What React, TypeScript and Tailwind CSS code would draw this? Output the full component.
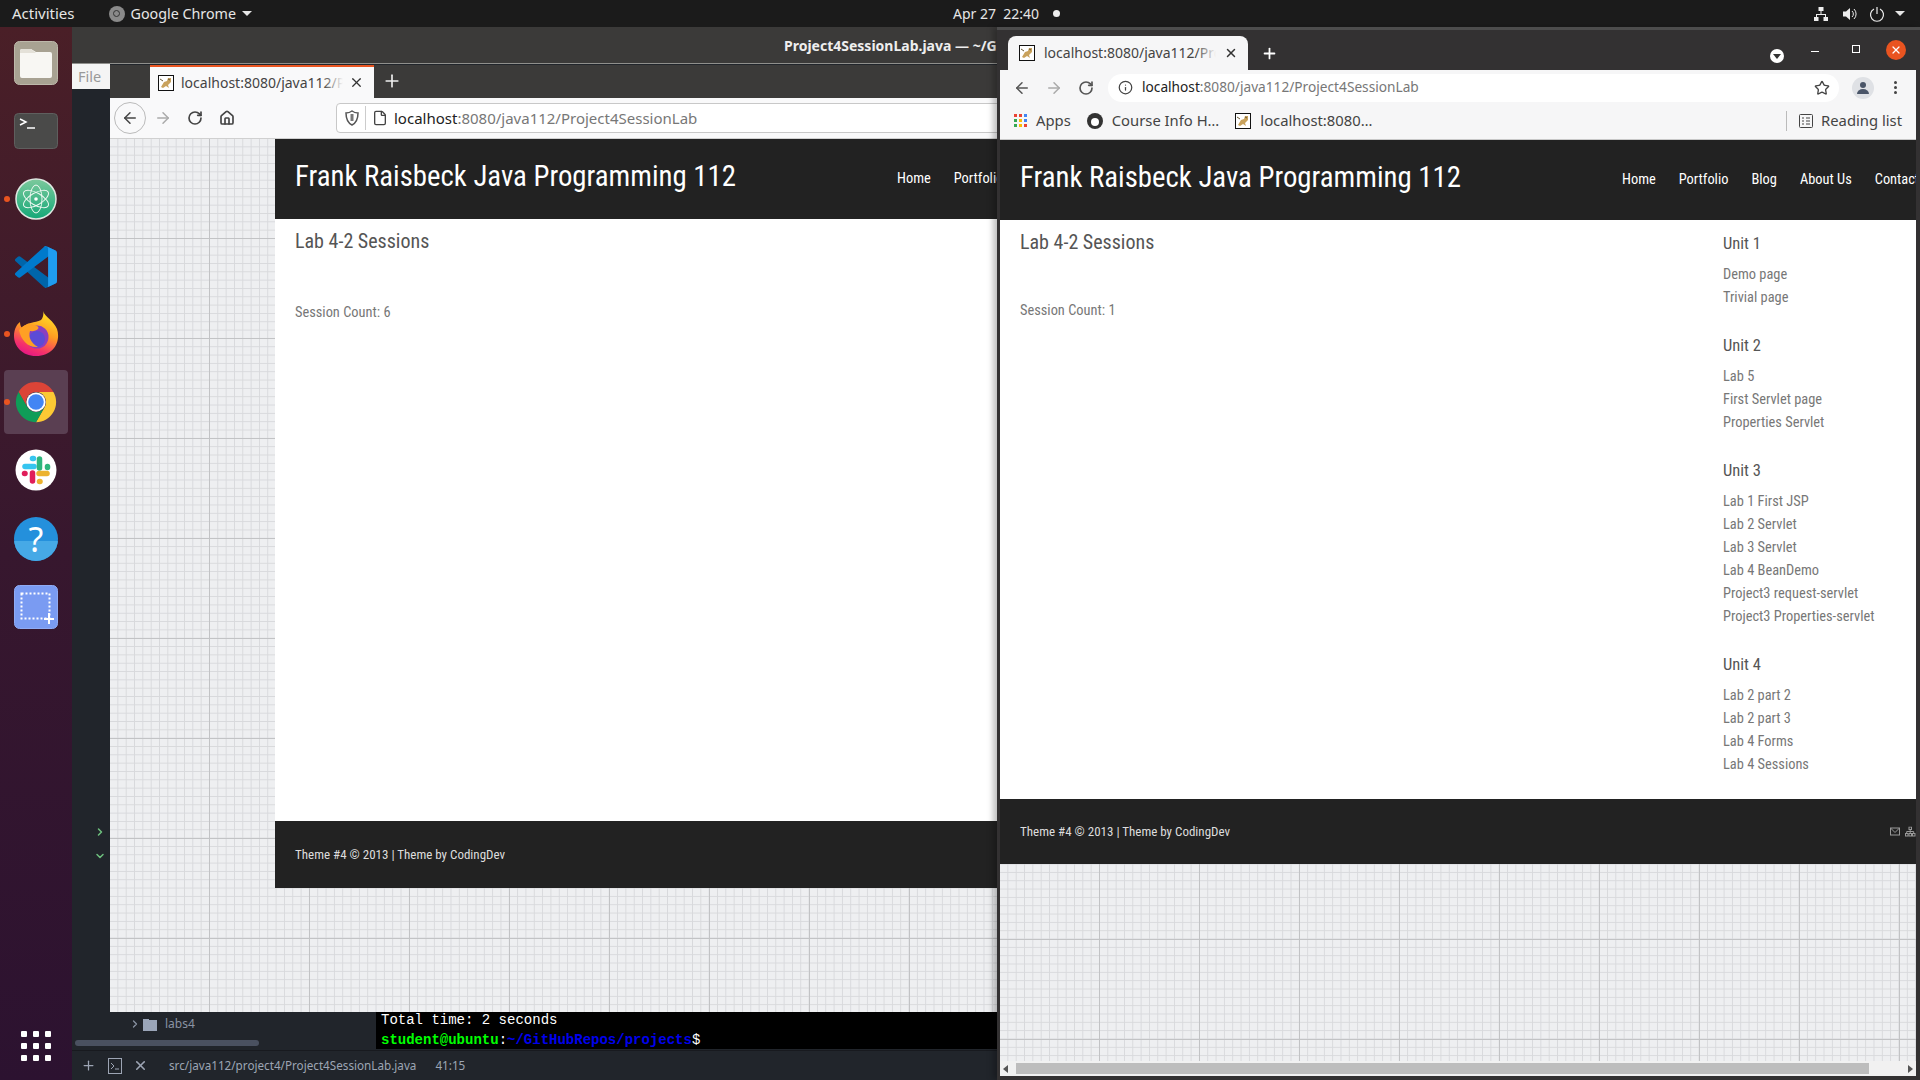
import { ArrowLeft, ArrowRight, ChevronDown, ChevronRight, File, House, Info, Plus, RotateCw, Star, X } from "lucide-react"

const condensed = "font-['Roboto_Condensed','Liberation_Sans_Narrow',Roboto,sans-serif]"

const units = [
  { title: "Unit 1", links: ["Demo page", "Trivial page"] },
  { title: "Unit 2", links: ["Lab 5", "First Servlet page", "Properties Servlet"] },
  { title: "Unit 3", links: ["Lab 1 First JSP", "Lab 2 Servlet", "Lab 3 Servlet", "Lab 4 BeanDemo", "Project3 request-servlet", "Project3 Properties-servlet"] },
  { title: "Unit 4", links: ["Lab 2 part 2", "Lab 2 part 3", "Lab 4 Forms", "Lab 4 Sessions"] },
]

// graph paper wallpaper behind both browser pages
const gridPaper =
  "bg-[#eeeff1] bg-[linear-gradient(to_right,#c2c3c5_1px,transparent_1px),linear-gradient(to_bottom,#c2c3c5_1px,transparent_1px),linear-gradient(to_right,#d8d9dc_1px,transparent_1px),linear-gradient(to_bottom,#d8d9dc_1px,transparent_1px)] bg-size-[100px_100px,100px_100px,8.333px_8.333px,8.333px_8.333px] bg-position-[99px_99px]"

function TomcatIcon() {
  return (
    <svg width="16" height="16" viewBox="0 0 16 16" className="shrink-0">
      <rect x="0.5" y="0.5" width="15" height="15" fill="#fff" stroke="#111" />
      <path d="M3 12 L6 7 L9 6 L10 3 L13 3 L13 7 L10 10 L11 13 L8 11 L5 13 Z" fill="#c9a25c" />
      <path d="M2 4 L5 6 M10 4 L12 5" stroke="#6b5a35" strokeWidth="1" />
    </svg>
  )
}

function FilesIcon() {
  return (
    <svg width="44" height="44" viewBox="0 0 44 44">
      <rect x="0.5" y="0.5" width="43" height="43" rx="5" fill="#a8a292" stroke="#bdb8aa" />
      <path d="M6 10 a2 2 0 0 1 2-2 h9 l5 3 h14 a2 2 0 0 1 2 2 v22 a2 2 0 0 1-2 2 H8 a2 2 0 0 1-2-2 z" fill="#f8f7f3" />
      <path d="M6 10 a2 2 0 0 1 2-2 h9 l5 4 H6 z" fill="#e4e1d8" />
    </svg>
  )
}

function TerminalIcon() {
  return (
    <svg width="44" height="36" viewBox="0 0 44 36">
      <rect x="0.5" y="0.5" width="43" height="35" rx="4" fill="#4a4a49" stroke="#5f5f5e" />
      <path d="M6 6 L12 9 L6 12" fill="none" stroke="#fff" strokeWidth="1.5" />
      <path d="M13 15 H21" stroke="#fff" strokeWidth="1.5" />
    </svg>
  )
}

function AtomIcon() {
  return (
    <svg width="42" height="42" viewBox="0 0 42 42">
      <defs>
        <linearGradient id="atomFill" x1="0" y1="0" x2="0" y2="1">
          <stop offset="0" stopColor="#7cc99c" />
          <stop offset="1" stopColor="#14a878" />
        </linearGradient>
      </defs>
      <circle cx="21" cy="21" r="20" fill="url(#atomFill)" stroke="#dfe8e2" strokeWidth="1.5" />
      <g fill="none" stroke="#eef8f2" strokeWidth="1">
        <ellipse cx="21" cy="21" rx="6" ry="14" />
        <ellipse cx="21" cy="21" rx="6" ry="14" transform="rotate(60 21 21)" />
        <ellipse cx="21" cy="21" rx="6" ry="14" transform="rotate(-60 21 21)" />
      </g>
      <circle cx="21" cy="21" r="1.8" fill="#fff" />
    </svg>
  )
}

function VsCodeIcon() {
  return (
    <svg width="42" height="42" viewBox="0 0 100 100">
      <path d="M96.5 89.2 L75.9 99.1 a6.2 6.2 0 0 1-7.1-1.2 L1.4 36.5 a4.2 4.2 0 0 1 0-6.2 l5.5-5 a4.2 4.2 0 0 1 5.3-.2 L93.4 85.7 A4.1 4.1 0 0 0 100 82.4 v.2 a6.2 6.2 0 0 1-3.5 5.6 z" fill="#0065a9" />
      <path d="M96.5 10.8 L75.9 .9 a6.2 6.2 0 0 0-7.1 1.2 L1.4 63.5 a4.2 4.2 0 0 0 0 6.2 l5.5 5 a4.2 4.2 0 0 0 5.3.2 L93.4 14.3 A4.1 4.1 0 0 1 100 17.6 v-.2 a6.2 6.2 0 0 0-3.5-5.6 z" fill="#007acc" />
      <path d="M75.9 99.1 a6.2 6.2 0 0 1-7.1-1.2 C72.5 101.6 78.8 99 78.8 93.8 V6.2 C78.8 1 72.5-1.6 68.8 2.1 a6.2 6.2 0 0 1 7.1-1.2 L96.5 10.8 A6.2 6.2 0 0 1 100 16.4 v67.2 a6.2 6.2 0 0 1-3.5 5.6 z" fill="#1f9cf0" />
    </svg>
  )
}

function FirefoxIcon() {
  return (
    <svg width="46" height="46" viewBox="0 0 46 46">
      <defs>
        <linearGradient id="foxBody" x1="0.7" y1="0" x2="0.3" y2="1">
          <stop offset="0" stopColor="#ffe226" />
          <stop offset="0.45" stopColor="#ff9a22" />
          <stop offset="0.8" stopColor="#f5326b" />
          <stop offset="1" stopColor="#e31587" />
        </linearGradient>
      </defs>
      <path d="M30 0 C32 6 41 10 44 18 C48 30 41 45 23 45 C9 45 1 35 1 25 C1 18 4 13 7 11 C7 14 8 16 9 17 C13 11 22 12 28 9 C30 7 31 3 30 0 Z" fill="url(#foxBody)" />
      <circle cx="24" cy="26" r="11.5" fill="#8a3fc0" />
      <circle cx="24" cy="28" r="8" fill="#5b4bd6" />
      <path d="M6 19 C10 13 18 12 24 15 C28 17 23 21 17 20 C15 26 18 32 25 36 C15 37 8 29 6 19 Z" fill="#ffa024" />
    </svg>
  )
}

function ChromeIcon() {
  return (
    <svg width="44" height="44" viewBox="0 0 48 48">
      <path d="M5 13 A22 22 0 0 1 43 13 L24 13 A11 11 0 0 0 14.5 29.5 Z" fill="#db4437" />
      <path d="M43 13 A22 22 0 0 1 24 46 L33.5 29.5 A11 11 0 0 0 24 13 Z" fill="#fcc934" />
      <path d="M24 46 A22 22 0 0 1 5 13 L14.5 29.5 A11 11 0 0 0 33.5 29.5 Z" fill="#0f9d58" />
      <circle cx="24" cy="24" r="10.5" fill="#fff" />
      <circle cx="24" cy="24" r="8.5" fill="#4285f4" />
    </svg>
  )
}

function SlackIcon() {
  return (
    <svg width="42" height="42" viewBox="0 0 42 42">
      <circle cx="21" cy="21" r="20.5" fill="#fff" />
      <g strokeWidth="5.5" strokeLinecap="round" fill="none">
        <path d="M10 17.5 H19" stroke="#36c5f0" />
        <path d="M17.5 9.5 H18.5" stroke="#36c5f0" />
        <path d="M24.5 10 V19" stroke="#2eb67d" />
        <path d="M32.5 17.5 V18.5" stroke="#2eb67d" />
        <path d="M24 24.5 H32" stroke="#ecb22e" />
        <path d="M24.5 32.5 H25" stroke="#ecb22e" />
        <path d="M17.5 24 V32" stroke="#e01e5a" />
        <path d="M9.5 24.5 H10" stroke="#e01e5a" />
      </g>
    </svg>
  )
}

function HelpIcon() {
  return (
    <div className="relative flex h-11 w-11 items-center justify-center overflow-hidden rounded-full bg-[#2490dc]">
      <div className="absolute inset-x-0 bottom-0 h-5 bg-[#46a9e6]" />
      <span className="relative font-['Noto_Sans',sans-serif] text-[34px] leading-none text-white">?</span>
    </div>
  )
}

function ScreenshotIcon() {
  return (
    <svg width="44" height="44" viewBox="0 0 44 44">
      <rect x="0.5" y="0.5" width="43" height="43" rx="5" fill="#7a9bf2" stroke="#8fabf4" />
      <rect x="7.5" y="8.5" width="28" height="25" fill="none" stroke="#fff" strokeWidth="2" strokeDasharray="2 2" />
      <path d="M35 28 V39 M30 34 H40" stroke="#fff" strokeWidth="2" />
    </svg>
  )
}

function RunningDot() {
  return <span className="absolute left-1 top-1/2 h-1.5 w-1.5 -translate-y-1/2 rounded-full bg-[#e95420]" />
}

function Dock() {
  return (
    <div className="absolute bottom-0 left-0 top-[27px] flex w-[72px] flex-col items-center bg-gradient-to-b from-[#4a1f27] via-[#37172e] to-[#2c1230] pt-[14px]">
      <FilesIcon />
      <div className="mt-[28px]"><TerminalIcon /></div>
      <div className="relative mt-[29px] flex w-full justify-center"><RunningDot /><AtomIcon /></div>
      <div className="mt-[26px]"><VsCodeIcon /></div>
      <div className="relative mt-[23px] flex w-full justify-center"><RunningDot /><FirefoxIcon /></div>
      <div className="relative mt-[13px] flex h-16 w-16 items-center justify-center rounded bg-[#5a3f52]">
        <span className="absolute left-0 top-1/2 h-1.5 w-1.5 -translate-y-1/2 rounded-full bg-[#e95420]" />
        <ChromeIcon />
      </div>
      <div className="mt-[15px]"><SlackIcon /></div>
      <div className="mt-[26px]"><HelpIcon /></div>
      <div className="mt-[24px]"><ScreenshotIcon /></div>
      <div className="mb-[19px] mt-auto grid grid-cols-3 gap-x-[6px] gap-y-[6px]">
        {Array.from({ length: 9 }).map((_, i) => (
          <span key={i} className="h-[6px] w-[6px] rounded-[1px] bg-white" />
        ))}
      </div>
    </div>
  )
}

function TopBar() {
  return (
    <div className="absolute inset-x-0 top-0 flex h-[27px] items-center bg-[#1b1b1b] font-['Noto_Sans',sans-serif] text-[14px] text-[#e6e6e6]">
      <span className="ml-3 text-[15px]">Activities</span>
      <span className="ml-[34px] flex h-4 w-4 items-center justify-center rounded-full bg-[#8a8a8a]">
        <span className="h-[7px] w-[7px] rounded-full border border-[#333]" />
      </span>
      <span className="ml-[6px] text-[14.3px]">Google Chrome</span>
      <span className="ml-[6px] h-0 w-0 border-x-[5px] border-t-[5px] border-x-transparent border-t-[#e6e6e6]" />
      <span className="absolute left-[953px]">Apr 27&nbsp;&nbsp;22:40</span>
      <span className="absolute left-[1053px] h-[7px] w-[7px] rounded-full bg-[#eee]" />
      <svg className="absolute left-[1813px]" width="16" height="16" viewBox="0 0 16 16" fill="#eee">
        <rect x="5.5" y="1" width="5" height="4" />
        <rect x="1" y="11" width="4.5" height="4" />
        <rect x="10.5" y="11" width="4.5" height="4" />
        <path d="M7.5 5 h1 v3 h4.5 v3 h-1 v-2 h-8 v2 h-1 v-3 h4.5 z" />
      </svg>
      <svg className="absolute left-[1842px]" width="16" height="16" viewBox="0 0 16 16" fill="none">
        <path d="M1 5.5 h3 l4-3.5 v12 l-4-3.5 h-3 z" fill="#eee" />
        <path d="M10 5 a4 4 0 0 1 0 6 M12 3 a7 7 0 0 1 0 10" stroke="#eee" />
      </svg>
      <svg className="absolute left-[1869px]" width="16" height="16" viewBox="0 0 16 16" fill="none" stroke="#eee" strokeWidth="1.2">
        <path d="M8 1 V8" />
        <path d="M5 3 a6.5 6.5 0 1 0 6 0" />
      </svg>
      <span className="absolute left-[1895px] h-0 w-0 border-x-[5px] border-t-[5px] border-x-transparent border-t-[#e6e6e6]" />
    </div>
  )
}

type SiteProps = {
  mainHeight: string
  footerHeight: string
  sessionGap: string
  sessionCount: number
  nav: string[]
  sidebar: boolean
}

// the demo site, shown in both browser windows at the same size
function Site({ mainHeight, footerHeight, sessionGap, sessionCount, nav, sidebar }: SiteProps) {
  return (
    <div className={`w-[960px] ${condensed}`}>
      <div className="flex h-20 items-center bg-[#222] text-white">
        <div className="w-[622px] pb-[6px] pl-[20px] text-[28.8px] leading-none whitespace-nowrap">Frank Raisbeck Java Programming 112</div>
        <div className="flex gap-[23px] pb-[1px] text-[14.4px]">
          {nav.map((item) => (
            <span key={item}>{item}</span>
          ))}
        </div>
      </div>
      <div className={`flex bg-white ${mainHeight}`}>
        <div className="w-[723px] pl-[20px] pt-[8px]">
          <h2 className="text-[20px] leading-[28px] text-[#555]">Lab 4-2 Sessions</h2>
          <p className={`text-[14.4px] leading-5 text-[#777] ${sessionGap}`}>Session Count: {sessionCount}</p>
        </div>
        {sidebar && (
          <div className="pt-[13px]">
            {units.map((unit) => (
              <div key={unit.title} className="mb-[26px]">
                <h4 className="text-[16.5px] leading-[22px] text-[#555]">{unit.title}</h4>
                <ul className="mt-[8px]">
                  {unit.links.map((link) => (
                    <li key={link} className="text-[14.4px] leading-[23px] text-[#777] whitespace-nowrap">{link}</li>
                  ))}
                </ul>
              </div>
            ))}
          </div>
        )}
      </div>
      <div className={`relative flex items-center bg-[#222] pl-[20px] text-[13px] text-[#ddd] ${footerHeight}`}>
        <span>Theme #4 © 2013 | Theme by CodingDev</span>
        <svg className="absolute left-[890px] top-1/2 -translate-y-1/2" width="26" height="11" viewBox="0 0 26 11" fill="none" stroke="#999">
          <rect x="0.5" y="1.5" width="9" height="7" />
          <path d="M0.5 1.5 L5 6 L9.5 1.5" />
          <rect x="19" y="0.5" width="2.5" height="2.5" />
          <rect x="15.5" y="7" width="2.5" height="2.5" />
          <rect x="19" y="7" width="2.5" height="2.5" />
          <rect x="22.5" y="7" width="2.5" height="2.5" />
          <path d="M20.2 3 V7 M16.7 7 V5 H23.7 V7" />
        </svg>
      </div>
    </div>
  )
}

function AtomWindow() {
  return (
    <div className="absolute bottom-0 left-[72px] right-0 top-[27px] overflow-hidden bg-[#21252b]">
      <div className="flex h-[37px] items-center border-b border-[#8f8f8c] bg-[#3b3a39]">
        <div className="w-[925px] overflow-hidden pl-[712px] font-['Noto_Sans',sans-serif] text-[14px] font-bold text-[#eee] whitespace-nowrap">
          Project4SessionLab.java — ~/GitHubRepos/projects
        </div>
      </div>
      <div className="absolute left-0 top-[37px] flex h-[25px] w-[38px] items-center bg-[#f4f4f4] pl-[6px] font-['Noto_Sans',sans-serif] text-[14.5px] text-[#999]">File</div>
      <ChevronRight className="absolute left-[22px] top-[799px] h-3 w-3 text-[#6ec07e]" strokeWidth={3} />
      <ChevronDown className="absolute left-[22px] top-[823px] h-3 w-3 text-[#6ec07e]" strokeWidth={3} />

      {/* tree panel bottom */}
      <div className="absolute left-[57px] top-[988px] flex items-center font-['Noto_Sans',sans-serif] text-[12px] text-[#8a93a3]">
        <ChevronRight className="h-3 w-3" strokeWidth={2.5} />
        <svg className="ml-[2px]" width="14" height="14" viewBox="0 0 14 14" fill="#9aa5b8">
          <path d="M0 2 h6 v1 h8 v11 H0 z" />
        </svg>
        <span className="ml-[8px]">labs4</span>
      </div>
      <div className="absolute left-[3px] top-[1013px] h-[6px] w-[184px] rounded-full bg-[#4a5160]" />

      {/* terminal */}
      <div className="absolute left-[304px] top-[985px] h-[37px] w-[700px] bg-black font-['Liberation_Mono',monospace] text-[14px] leading-[20px] text-white">
        <div className="-mt-[2px] pl-[5px]">Total time: 2 seconds</div>
        <div className="pl-[5px] font-bold">
          <span className="text-[#00ff00]">student@ubuntu</span>
          <span className="font-normal">:</span>
          <span className="text-[#0000ee]">~/GitHubRepos/projects</span>
          <span className="font-normal">$</span>
        </div>
      </div>

      {/* status bar */}
      <div className="absolute inset-x-0 bottom-0 flex h-[30px] items-center border-t border-[#181a1f] font-['Noto_Sans',sans-serif] text-[11.7px] text-[#9da5b4]">
        <Plus className="ml-[9px] h-[15px] w-[15px]" />
        <svg className="ml-[12px]" width="14" height="16" viewBox="0 0 14 16" fill="none" stroke="#9da5b4">
          <rect x="0.5" y="0.5" width="13" height="15" />
          <path d="M3 5 L6 8 L3 11 M7 11 H11" />
        </svg>
        <X className="ml-[11px] h-[15px] w-[15px]" strokeWidth={2.5} />
        <span className="ml-[21px]">src/java112/project4/Project4SessionLab.java</span>
        <span className="ml-[19px]">41:15</span>
      </div>
    </div>
  )
}

function FirefoxWindow() {
  return (
    <div className="absolute left-[110px] top-[65px] flex h-[947px] w-[888px] flex-col overflow-hidden">
      <div className="flex h-[33px] shrink-0 bg-[#3b3a39]">
        <div className="ml-[40px] flex w-[224px] items-center border-t-2 border-[#e95420] bg-[#f9f9fa] pl-[8px] font-['Noto_Sans',sans-serif] text-[14px] text-[#444]">
          <TomcatIcon />
          <span className="relative ml-[7px] w-[162px] overflow-hidden whitespace-nowrap">
            localhost:8080/java112/Project4SessionLab
            <span className="absolute inset-y-0 right-0 w-5 bg-gradient-to-r from-transparent to-[#f9f9fa]" />
          </span>
          <X className="ml-[6px] h-[15px] w-[15px] text-[#333]" />
        </div>
        <Plus className="ml-[8px] mt-[6px] h-5 w-5 text-[#eee]" />
      </div>
      <div className="flex h-[41px] shrink-0 items-center border-b border-[#d0d0d0] bg-[#f9f9fa] font-['Noto_Sans',sans-serif]">
        <div className="ml-[4px] flex h-8 w-8 items-center justify-center rounded-full border border-[#bbb]">
          <ArrowLeft className="h-[18px] w-[18px] text-[#444]" />
        </div>
        <ArrowRight className="ml-[8px] h-[18px] w-[18px] text-[#aaa]" />
        <RotateCw className="ml-[15px] h-4 w-4 text-[#444]" strokeWidth={2.5} />
        <House className="ml-[16px] h-4 w-4 text-[#444]" strokeWidth={2.5} />
        <div className="ml-[101px] flex h-[30px] flex-1 items-center rounded-l border border-[#c8c8c8] bg-white pl-[8px] text-[15px]">
          <svg width="14" height="16" viewBox="0 0 14 16" fill="none" stroke="#555" strokeWidth="1.5">
            <path d="M7 1 C5 2.5 3 3 1 3 C1 9 3 13 7 15 C11 13 13 9 13 3 C11 3 9 2.5 7 1 Z" />
            <path d="M7 4 V11" strokeWidth="3" stroke="#777" />
          </svg>
          <span className="ml-[6px] h-6 w-px bg-[#ccc]" />
          <File className="ml-[6px] h-4 w-4 text-[#444]" />
          <span className="ml-[6px] whitespace-nowrap">
            <span className="text-[#222]">localhost</span>
            <span className="text-[#777]">:8080/java112/Project4SessionLab</span>
          </span>
        </div>
      </div>
      <div className={`flex-1 overflow-hidden pl-[165px] ${gridPaper}`}>
        <Site mainHeight="h-[602px]" footerHeight="h-[67px]" sessionGap="mt-[48px]" sessionCount={6} nav={["Home", "Portfolio"]} sidebar={false} />
      </div>
    </div>
  )
}

function ChromeWindow() {
  return (
    <div className="absolute bottom-0 left-[997px] right-0 top-[27px] flex flex-col bg-[#333132] shadow-[-4px_0_6px_rgba(0,0,0,0.25)]">
      <div className="h-[3px] shrink-0 bg-[#4c4c4c]" />
      <div className="relative flex h-[40px] shrink-0 items-end font-['Noto_Sans',sans-serif] text-[14px]">
        <div className="ml-[11px] flex h-[34px] w-[240px] items-center rounded-t-lg bg-[#f6f6f7] pb-[1px] pl-[11px] text-[#444]">
          <TomcatIcon />
          <span className="relative ml-[9px] w-[172px] overflow-hidden whitespace-nowrap">
            localhost:8080/java112/Project4SessionLab
            <span className="absolute inset-y-0 right-0 w-5 bg-gradient-to-r from-transparent to-[#f6f6f7]" />
          </span>
          <X className="ml-[8px] h-[14px] w-[14px] text-[#333]" strokeWidth={2.5} />
        </div>
        <Plus className="ml-[13px] mb-[8px] h-[17px] w-[17px] text-white" strokeWidth={2.5} />
        <div className="absolute left-[773px] top-[19px] flex h-[14px] w-[14px] items-center justify-center rounded-full bg-white">
          <span className="h-0 w-0 border-x-[4px] border-t-[5px] border-x-transparent border-t-[#333]" />
        </div>
        <span className="absolute left-[814px] top-[21px] h-px w-2 bg-white" />
        <span className="absolute left-[855px] top-[15px] h-2 w-2 border border-white" />
        <div className="absolute left-[889px] top-[10px] flex h-5 w-5 items-center justify-center rounded-full bg-[#e95420]">
          <X className="h-3 w-3 text-white" strokeWidth={2.5} />
        </div>
      </div>
      <div className="ml-[3px] mr-[4px] flex min-h-0 flex-1 flex-col">
        <div className="flex h-[35px] shrink-0 items-center bg-[#f6f6f7] font-['Noto_Sans',sans-serif]">
          <ArrowLeft className="ml-[13px] h-[18px] w-[18px] text-[#555]" />
          <ArrowRight className="ml-[14px] h-[18px] w-[18px] text-[#aaa]" />
          <RotateCw className="ml-[15px] h-4 w-4 text-[#555]" strokeWidth={2.5} />
          <div className="ml-[14px] flex h-[28px] w-[731px] items-center rounded-full bg-white pl-[10px] text-[13.7px]">
            <Info className="h-[15px] w-[15px] text-[#444]" />
            <span className="ml-[9px] whitespace-nowrap">
              <span className="text-[#222]">localhost</span>
              <span className="text-[#777]">:8080/java112/Project4SessionLab</span>
            </span>
            <Star className="ml-auto mr-[9px] h-4 w-4 text-[#444]" />
          </div>
          <div className="ml-[13px] flex h-[22px] w-[22px] items-center justify-center overflow-hidden rounded-full bg-[#dfe1e5]">
            <svg width="14" height="14" viewBox="0 0 14 14" fill="#4a5568">
              <circle cx="7" cy="4" r="3" />
              <path d="M1 13 a6 5 0 0 1 12 0 z" />
            </svg>
          </div>
          <div className="ml-[20px] flex flex-col gap-[2px]">
            <span className="h-[3px] w-[3px] rounded-full bg-[#444]" />
            <span className="h-[3px] w-[3px] rounded-full bg-[#444]" />
            <span className="h-[3px] w-[3px] rounded-full bg-[#444]" />
          </div>
        </div>
        <div className="flex h-[35px] shrink-0 items-center border-b border-[#c8c8c8] bg-[#f6f6f7] pb-[3px] font-['Noto_Sans',sans-serif] text-[14.8px] text-[#444]">
          <div className="ml-[14px] grid grid-cols-3 gap-[2px]">
            {["#ea4335", "#ea4335", "#4285f4", "#34a853", "#fbbc04", "#4285f4", "#34a853", "#fbbc04", "#ea4335"].map((color, i) => (
              <span key={i} style={{ backgroundColor: color }} className="h-[3px] w-[3px]" />
            ))}
          </div>
          <span className="ml-[9px]">Apps</span>
          <span className="relative ml-[16px] flex h-4 w-4 items-center justify-center rounded-full bg-[#333]">
            <span className="mt-[2px] h-2 w-2 rounded-full bg-white" />
          </span>
          <span className="ml-[9px]">Course Info H…</span>
          <span className="ml-[16px]"><TomcatIcon /></span>
          <span className="ml-[9px]">localhost:8080…</span>
          <span className="ml-auto h-5 w-px bg-[#bbb]" />
          <svg className="ml-[12px]" width="14" height="14" viewBox="0 0 14 14" fill="none" stroke="#444">
            <rect x="0.5" y="0.5" width="13" height="13" rx="1" />
            <path d="M3 4 H5 M7 4 H11 M3 7 H5 M7 7 H11 M3 10 H5 M7 10 H11" />
          </svg>
          <span className="ml-[8px] mr-[14px]">Reading list</span>
        </div>
        <div className={`min-h-0 flex-1 overflow-hidden ${gridPaper}`}>
          <Site mainHeight="h-[579px]" footerHeight="h-[65px]" sessionGap="mt-[45px]" sessionCount={1} nav={["Home", "Portfolio", "Blog", "About Us", "Contact"]} sidebar />
        </div>
        <div className="flex h-[15px] shrink-0 items-center bg-[#f1f1f1]">
          <span className="ml-[3px] h-0 w-0 border-y-[4px] border-r-[5px] border-y-transparent border-r-[#555]" />
          <span className="ml-[8px] h-[11px] w-[853px] bg-[#bdbdbd]" />
          <span className="ml-auto mr-[3px] h-0 w-0 border-y-[4px] border-l-[5px] border-y-transparent border-l-[#555]" />
        </div>
        <div className="h-[4px] shrink-0" />
      </div>
    </div>
  )
}

export default function App() {
  return (
    <div className="relative h-[1080px] w-[1920px] overflow-hidden bg-[#1b1b1b]">
      <TopBar />
      <Dock />
      <AtomWindow />
      <FirefoxWindow />
      <ChromeWindow />
    </div>
  )
}
